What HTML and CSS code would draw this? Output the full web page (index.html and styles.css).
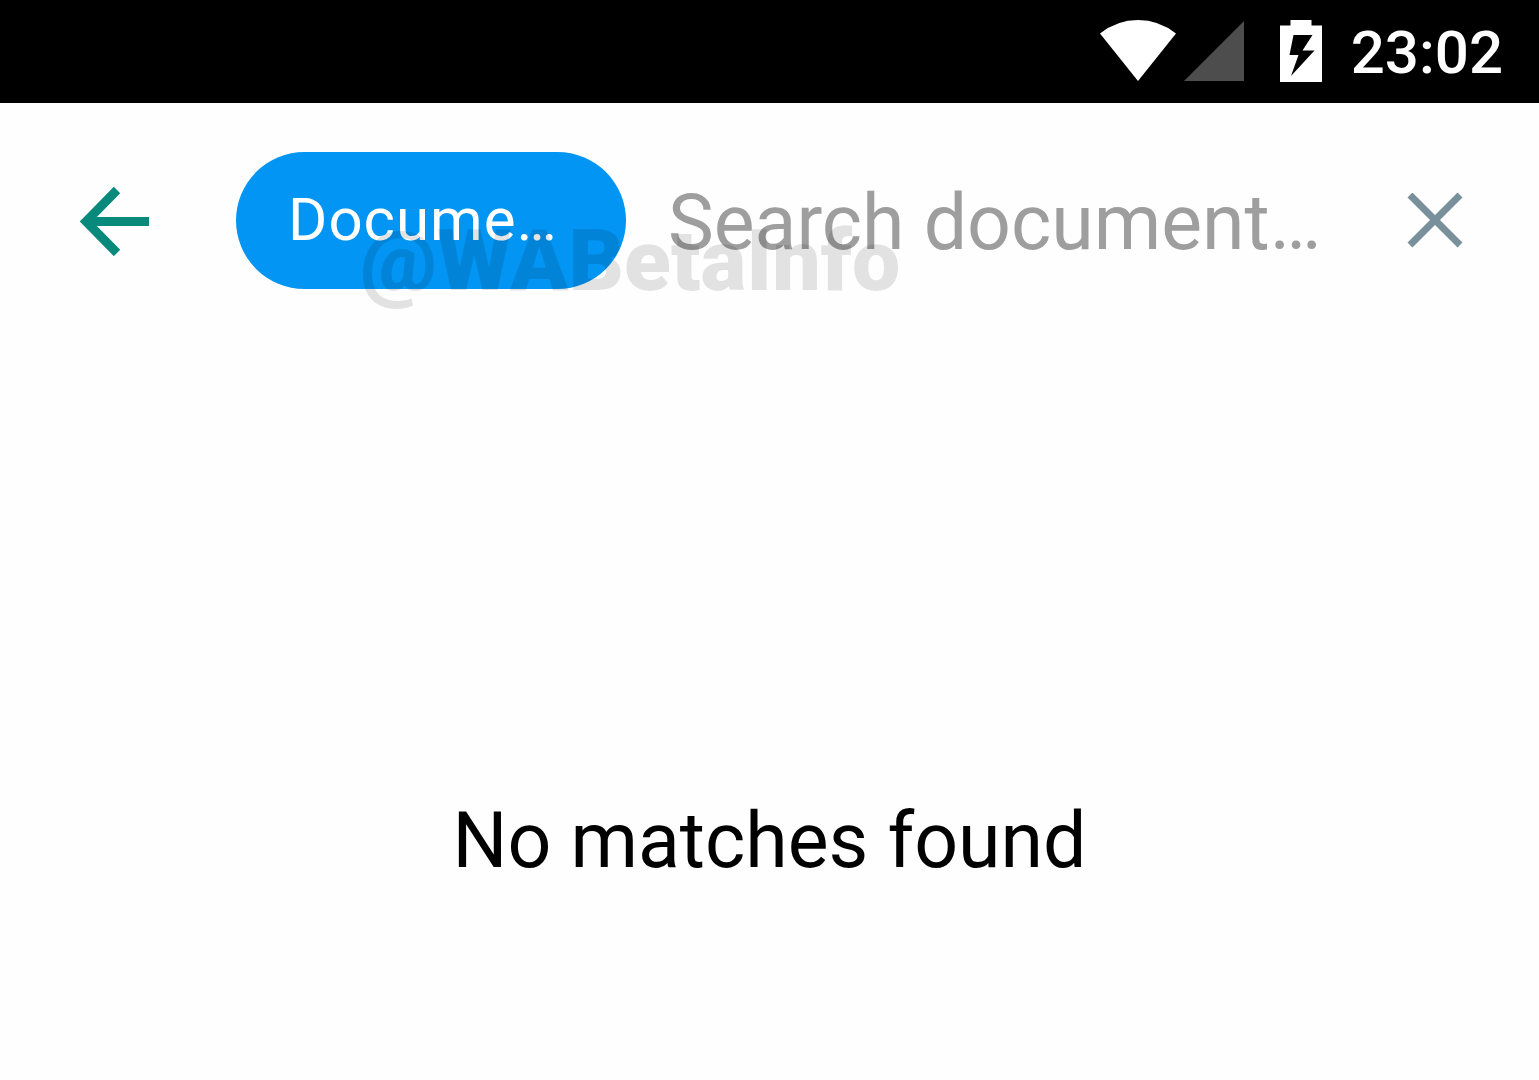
FILE: index.html
```
<!DOCTYPE HTML>
<html lang="en">
<head>
	<meta charset="utf-8">
	<title>Search documents</title>
	<link rel="stylesheet" href="styles.css">
</head>
<body>
	<div class="status-bar">
		<svg class="wifi" width="76" height="62" viewBox="0 0 76 62"><path d="M0 13.500Q17 0 38 0T76 13.500L38 61z"/></svg>
		<svg class="signal" width="60" height="62" viewBox="0 0 60 62"><path d="M60 1V61H0z"/></svg>
		<svg class="battery" width="42" height="62" viewBox="0 0 42 62">
			<path d="M0 5.500H10.500V0H31.500V5.500H42V62H0z"/>
			<path class="bolt" d="M13.500 15H32.500L22.500 30.500H34.500L11 56L18.500 35H9.500z"/>
		</svg>
		<span class="clock">23:02</span>
	</div>
	<header class="toolbar">
		<button class="icon-btn back" type="button" aria-label="Back">
			<svg width="70" height="70" viewBox="0 0 70 70"><path d="M37 4L6 35.500L37 67M7 35.500H69"/></svg>
		</button>
		<form class="search">
			<button class="chip" type="button">Docume…</button>
			<input class="field" type="text" placeholder="Search document…" aria-label="Search documents">
			<button class="icon-btn clear" type="reset" aria-label="Clear">
				<svg width="56" height="56" viewBox="0 0 56 56"><path d="M3 2L53 52M53 2L3 52"/></svg>
			</button>
		</form>
		<span class="watermark">@WABetaInfo</span>
	</header>
	<main class="results">
		<p class="empty">No matches found</p>
	</main>
</body>
</html>
```
FILE: styles.css
```
*, *::after, *::before{
	box-sizing: border-box;
	margin: 0;
	padding: 0;
}
body{
	min-height: 100vh;
	display: flex;
	flex-direction: column;
	background-color: #fefefe;
	font-family: Roboto, "Liberation Sans", sans-serif;
}
svg{
	display: block;
	flex: none;
}
button, input{
	border: 0;
	background: none;
	font-family: inherit;
}

.status-bar{
	display: flex;
	justify-content: flex-end;
	align-items: center;
	padding: 15px 36px 16px 0;
	background-color: #000;
	color: #fff;
	fill: #fff;
}
.signal{
	margin-left: 8px;
	fill: #4d4d4d;
}
.battery{margin-left: 36px;}
.bolt{fill: #000;}
.clock{
	margin-left: 29px;
	padding-top: 4px;
	font-size: 60px;
	font-weight: 500;
	line-height: 68px;
}

.toolbar{
	position: relative;
	display: flex;
	align-items: center;
	padding: 49px 76px 47px 80px;
}
.icon-btn{
	flex: none;
	fill: none;
	cursor: pointer;
}
.back{
	stroke: #07897b;
	stroke-width: 9;
}
.clear{
	stroke: #78909c;
	stroke-width: 7;
}
.search{
	flex: 1;
	min-width: 0;
	display: flex;
	align-items: center;
	margin-left: 86px;
}
.chip{
	flex: none;
	min-width: 390px;
	height: 137px;
	padding: 0 52px 2px;
	border-radius: 69px;
	background-color: #0295f3;
	color: #fff;
	font-size: 60px;
	letter-spacing: 1px;
	text-align: left;
}
.field{
	flex: 1;
	min-width: 0;
	height: 92px;
	margin: 0 40px 0 42px;
	padding-top: 4px;
	font-size: 77px;
	outline: none;
}
.field::placeholder{
	color: #9e9e9e;
	opacity: 1;
}
.watermark{
	position: absolute;
	top: 102px;
	left: 360px;
	color: rgba(0, 0, 0, .11);
	font-size: 86px;
	font-weight: 900;
	line-height: 112px;
	pointer-events: none;
}

.results{
	flex: 1;
	padding: 459px 40px 40px;
	text-align: center;
}
.empty{
	color: #000;
	font-size: 77px;
	line-height: 92px;
}
```
